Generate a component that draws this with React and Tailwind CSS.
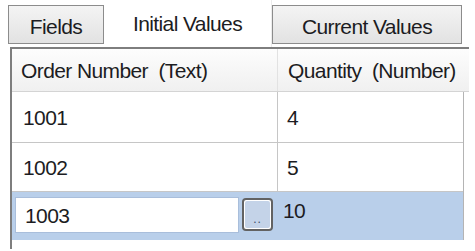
import React from 'react'

const rows = [
  { order: '1001', qty: '4' },
  { order: '1002', qty: '5' },
]

export default function App() {
  return (
    <div className="w-[475px] h-[251px] bg-white overflow-hidden text-[#1c1c22] text-[21px] tracking-[-0.6px] leading-none font-['Liberation_Sans',Arial,sans-serif]">
      {/* tabs */}
      <div className="flex h-[47px] pl-[8px]">
        <div className="mt-[5px] w-[96px] h-[39px] flex items-center justify-center pt-[3px] border border-[#8c8c8c] bg-gradient-to-b from-[#f4f4f4] to-[#e2e2e2]">
          Fields
        </div>
        <div className="w-[168px] h-[47px] flex items-center justify-center pb-[1px] bg-white border-r border-[#ececec]">
          Initial Values
        </div>
        <div className="mt-[5px] w-[190px] h-[39px] flex items-center justify-center pt-[3px] border border-[#8c8c8c] bg-gradient-to-b from-[#f4f4f4] to-[#e2e2e2]">
          Current Values
        </div>
      </div>

      {/* grid */}
      <div className="ml-[10px] w-[459px] h-[202px] border-l-2 border-t-2 border-[#7e7e7e]">
        <div className="flex h-[43px] border-b border-[#d4d4d4] bg-gradient-to-b from-[#fdfdfd] to-[#f0f0f0]">
          <div className="w-[266px] flex items-center pl-[9px] border-r border-[#e2e2e2]">
            Order Number&nbsp;&nbsp;(Text)
          </div>
          <div className="flex-1 flex items-center pl-[10px]">
            Quantity&nbsp;&nbsp;(Number)
          </div>
        </div>

        <div className="w-[452px] border-r border-[#b4b4b4]">
          {rows.map((r, i) => (
            <div key={r.order} className={`flex border-b border-[#c6c6c6] ${i === 0 ? 'h-[51px]' : 'h-[49px]'}`}>
              <div className="w-[266px] flex items-center pl-[11px] border-r border-[#c6c6c6]">{r.order}</div>
              <div className="flex-1 flex items-center pl-[9px]">{r.qty}</div>
            </div>
          ))}

          {/* selected editing row */}
          <div className="flex h-[48px] bg-[#b9cfea]">
            <div className="w-[266px] flex items-start pl-[3px] pt-[5px]">
              <div className="w-[224px] h-[36px] bg-white border border-[#a9bedb] flex items-center pl-[9px]">
                1003
              </div>
              <div className="ml-[3px] mt-[1px] w-[31px] h-[33px] rounded-[4px] border-2 border-[#626262] p-[1px] bg-white">
                <div className="w-full h-full rounded-[2px] bg-[#c4d3e8] flex items-end justify-center pb-[3px]">
                  <span className="text-[12px] leading-none text-[#3a4a66] tracking-[1px]">..</span>
                </div>
              </div>
            </div>
            <div className="flex-1 pl-[5px] pt-[8px]">10</div>
          </div>
        </div>
      </div>
    </div>
  )
}
